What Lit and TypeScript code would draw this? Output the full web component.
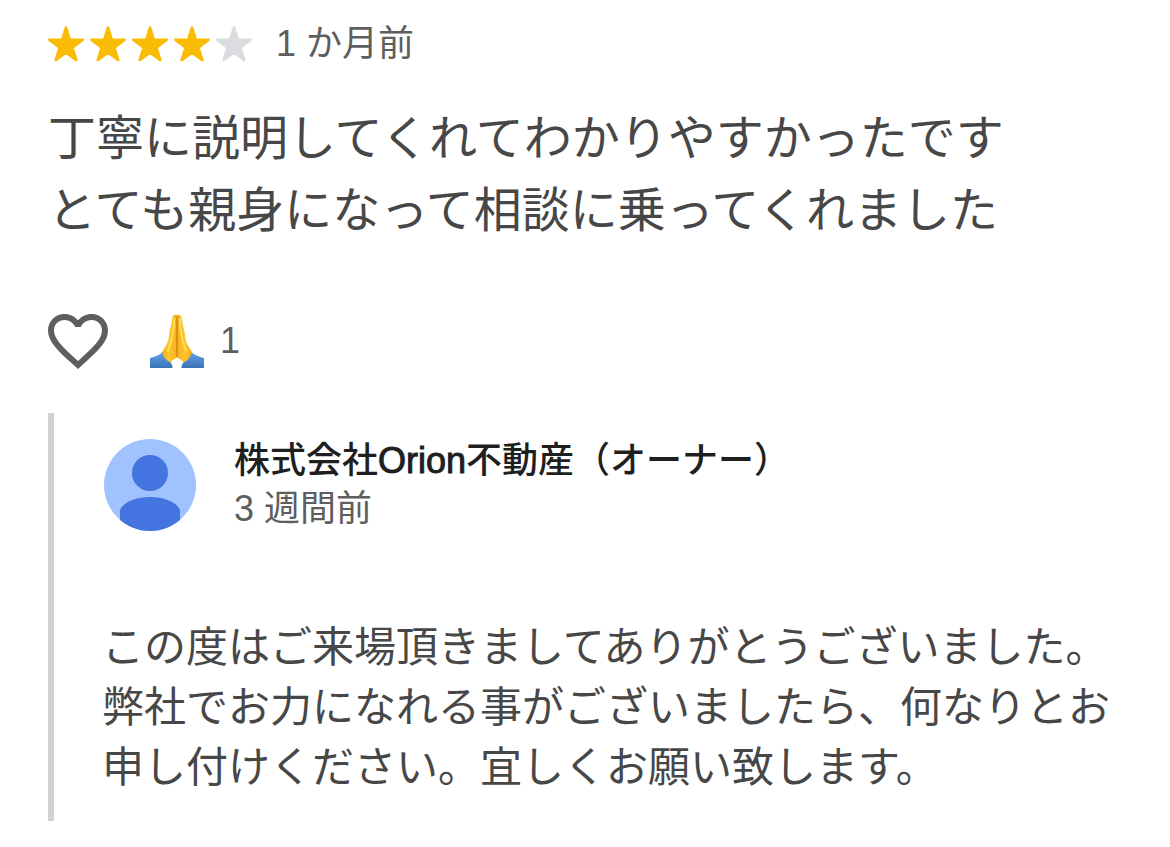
import { LitElement, html, css, svg } from "lit";
import { customElement, property } from "lit/decorators.js";

@customElement("star-rating")
class StarRating extends LitElement {
  @property({ type: Number }) value = 0;

  static styles = css`
    :host { display: flex; gap: 6px; }
    .star { width: 36px; height: 36px; display: block; fill: #dadce0; stroke: #dadce0; }
    .on { fill: #fabb05; stroke: #fabb05; }
  `;

  render() {
    return [1, 2, 3, 4, 5].map(
      (n) => html`<svg class="star ${n <= this.value ? "on" : ""}" viewBox="0 0 36 36" aria-hidden="true">
        <path stroke-width="2" stroke-linejoin="round"
          d="M17.700 1.200 H18.300 L22 13.300 L34.900 13.500 V14 L24.800 21.700 L28.600 34 L28.200 34.400 L18 27 L7.800 34.400 L7.400 34 L11.200 21.700 L1.100 14 V13.500 L14 13.300 Z"/>
      </svg>`
    );
  }
}

@customElement("owner-reply")
class OwnerReply extends LitElement {
  static styles = css`
    :host { display: block; border-left: 6px solid #d2d2d2; padding: 24px 0 23px 48px; }
    .head { display: flex; align-items: flex-start; gap: 36px; }
    .avatar { width: 96px; height: 96px; flex: none; display: block; }
    .name { margin: 0; font-size: 36px; line-height: 48px; font-weight: 500; color: #1f1f1f; }
    .latin { -webkit-text-stroke: 1px #1f1f1f; }
    .date { margin: 0; font-size: 36px; line-height: 48px; color: #5e5e5e; }
    .body { margin: 85px 0 0; font-size: 42px; line-height: 60px; color: #474747; }
  `;

  render() {
    return html`
      <header class="head">
        <svg class="avatar" viewBox="0 0 96 96" role="img" aria-label="オーナー">
          <clipPath id="disc"><circle cx="48" cy="48" r="46"/></clipPath>
          <circle cx="48" cy="48" r="46" fill="#a0c2ff"/>
          <g clip-path="url(#disc)" fill="#4374e0">
            <circle cx="48" cy="36" r="18"/>
            <path d="M18 96 V73 C22 64 35 60 48 60 S74 64 78 73 V96 Z"/>
          </g>
        </svg>
        <div>
          <h3 class="name">株式会社<span class="latin">Orion</span>不動産（オーナー）</h3>
          <p class="date">3 週間前</p>
        </div>
      </header>
      <p class="body">この度はご来場頂きましてありがとうございました。弊社でお力になれる事がございましたら、何なりとお申し付けください。宜しくお願い致します。</p>
    `;
  }
}

const arm = svg`
  <path d="M27 1 C23 0 22.200 3 22 7 C21 12 19 19 18.500 25 C17 31 14 35 11 39.500 C13 45 16 49 20 50 C21 46 25 45 27 43.500 Z" fill="url(#skin)"/>
  <path d="M24.200 5 C24.200 16 22 26 18 37" fill="none" stroke="#ffdc5c" stroke-width="2" stroke-linecap="round"/>
  <path d="M0 44 C5 43 9 41 12.500 38.500 C13 43 17 47 20.500 48.500 C22 50 22.500 52 22.500 54 H0 Z" fill="url(#cuff)"/>
`;

@customElement("app-root")
class AppRoot extends LitElement {
  static styles = css`
    :host {
      display: block;
      font-family: "Liberation Sans", "Noto Sans CJK JP", sans-serif;
      background: #fff;
    }
    .review { padding: 18px 48px 26px; }
    .meta { display: flex; align-items: center; gap: 24px; }
    .date { font-size: 36px; line-height: 52px; color: #5e5e5e; }
    .text { margin: 33px 0 0; font-size: 48px; line-height: 72px; color: #474747; }
    .actions { display: flex; align-items: center; gap: 36px; margin: 58px 0 36px -6px; }
    .icon-button, .reaction {
      display: flex; align-items: center; padding: 0; border: 0; background: none;
      font: inherit; color: #5e5e5e; cursor: pointer;
    }
    .heart { width: 72px; height: 72px; display: block; fill: #5e5e5e; }
    .reaction { gap: 16px; font-size: 36px; line-height: 48px; }
    .pray { width: 54px; height: 54px; display: block; }
  `;

  render() {
    return html`
      <article class="review" lang="ja">
        <div class="meta">
          <star-rating value="4" role="img" aria-label="5 つ星のうち 4"></star-rating>
          <span class="date">1 か月前</span>
        </div>
        <p class="text">丁寧に説明してくれてわかりやすかったです<br>とても親身になって相談に乗ってくれました</p>
        <div class="actions">
          <button class="icon-button" type="button" aria-label="いいね">
            <svg class="heart" viewBox="0 0 24 24" aria-hidden="true">
              <path d="M16.500 3c-1.740 0-3.410.81-4.500 2.090C10.910 3.810 9.240 3 7.500 3 4.420 3 2 5.420 2 8.500c0 3.780 3.400 6.860 8.550 11.540L12 21.350l1.450-1.320C18.600 15.360 22 12.280 22 8.500 22 5.420 19.580 3 16.500 3zm-4.400 15.550l-.1.100-.1-.1C7.140 14.240 4 11.390 4 8.500 4 6.500 5.500 5 7.500 5c1.540 0 3.040.99 3.570 2.360h1.870C13.460 5.990 14.960 5 16.500 5c2 0 3.500 1.500 3.500 3.500 0 2.890-3.140 5.740-7.900 10.050z"/>
            </svg>
          </button>
          <button class="reaction" type="button">
            <svg class="pray" viewBox="0 0 54 54" role="img" aria-label="合掌">
              <defs>
                <linearGradient id="skin" x1="0" y1="0" x2="1" y2="0">
                  <stop offset="0" stop-color="#f5a81c"/><stop offset=".5" stop-color="#ffc62b"/><stop offset="1" stop-color="#f7b01f"/>
                </linearGradient>
                <linearGradient id="cuff" x1="0" y1="0" x2="0" y2="1">
                  <stop offset="0" stop-color="#5fa3e6"/><stop offset="1" stop-color="#3b72b8"/>
                </linearGradient>
              </defs>
              <g>${arm}</g>
              <g transform="matrix(-1 0 0 1 54 0)">${arm}</g>
              <path d="M27 3 V43" stroke="#c67a10" stroke-width="1.200"/>
            </svg>
            <span>1</span>
          </button>
        </div>
        <owner-reply></owner-reply>
      </article>
    `;
  }
}
